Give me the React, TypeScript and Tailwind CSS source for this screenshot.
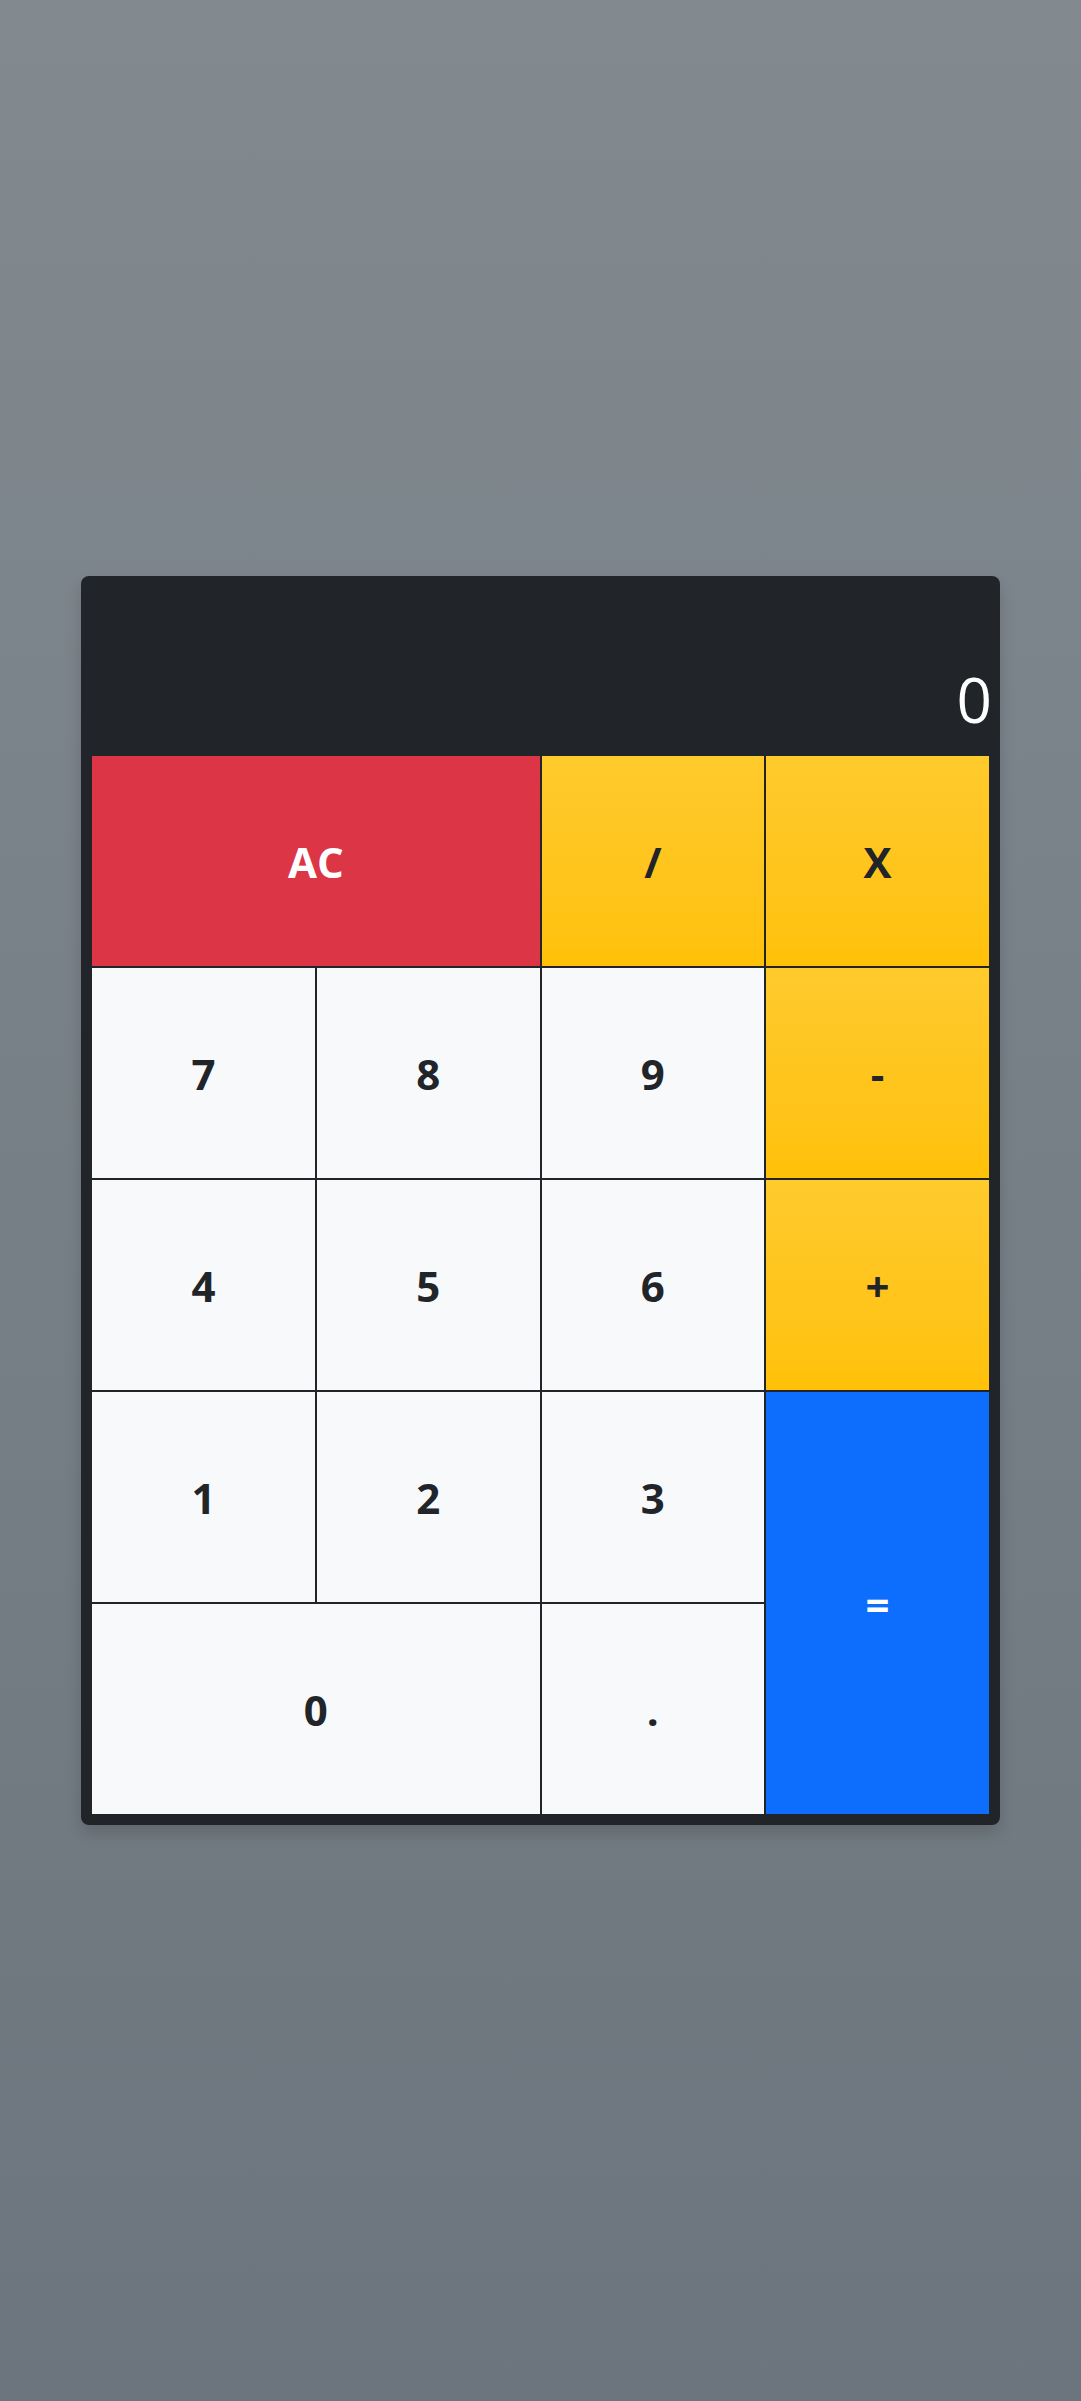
import { useState } from "react";

type Key = {
  label: string;
  kind: "clear" | "op" | "num" | "equals";
  span?: string;
};

const keys: Key[] = [
  { label: "AC", kind: "clear", span: "col-span-2" },
  { label: "/", kind: "op" },
  { label: "X", kind: "op" },
  { label: "7", kind: "num" },
  { label: "8", kind: "num" },
  { label: "9", kind: "num" },
  { label: "-", kind: "op" },
  { label: "4", kind: "num" },
  { label: "5", kind: "num" },
  { label: "6", kind: "num" },
  { label: "+", kind: "op" },
  { label: "1", kind: "num" },
  { label: "2", kind: "num" },
  { label: "3", kind: "num" },
  { label: "=", kind: "equals", span: "row-span-2" },
  { label: "0", kind: "num", span: "col-span-2" },
  { label: ".", kind: "num" },
];

const kindClass = {
  clear: "bg-[#dc3545] text-white",
  op: "bg-linear-to-b from-[#ffca2c] to-[#ffc107] text-[#212529]",
  num: "bg-[#f8f9fa] text-[#212529]",
  equals: "bg-[#0d6efd] text-white",
};

export default function App() {
  const [display, setDisplay] = useState("0");

  function press(k: Key) {
    if (k.kind === "clear") setDisplay("0");
    else if (k.kind === "num") setDisplay((d) => (d === "0" && k.label !== "." ? k.label : d + k.label));
  }

  return (
    <main
      className="flex min-h-screen items-center justify-center bg-linear-to-b from-[#828a90] to-[#6c757d]"
      style={{ fontFamily: '"Open Sans", "Noto Sans", sans-serif' }}
    >
      <div className="w-[85%] rounded-lg bg-[#212529] px-[10px] pb-[10px] shadow-[0_8px_16px_rgba(0,0,0,0.15)]">
        <div className="flex h-[179px] items-end justify-end pb-[25px]">
          <span className="-mr-[2px] text-[62px] font-normal leading-none text-white">{display}</span>
        </div>

        <div className="grid grid-cols-4 grid-rows-[repeat(5,212px)]">
          {keys.map((k) => (
            <button
              key={k.label}
              onClick={() => press(k)}
              className={`flex items-center justify-center border border-[#212529] text-[42px] font-bold ${kindClass[k.kind]} ${k.span ?? ""}`}
            >
              {k.label}
            </button>
          ))}
        </div>
      </div>
    </main>
  );
}
